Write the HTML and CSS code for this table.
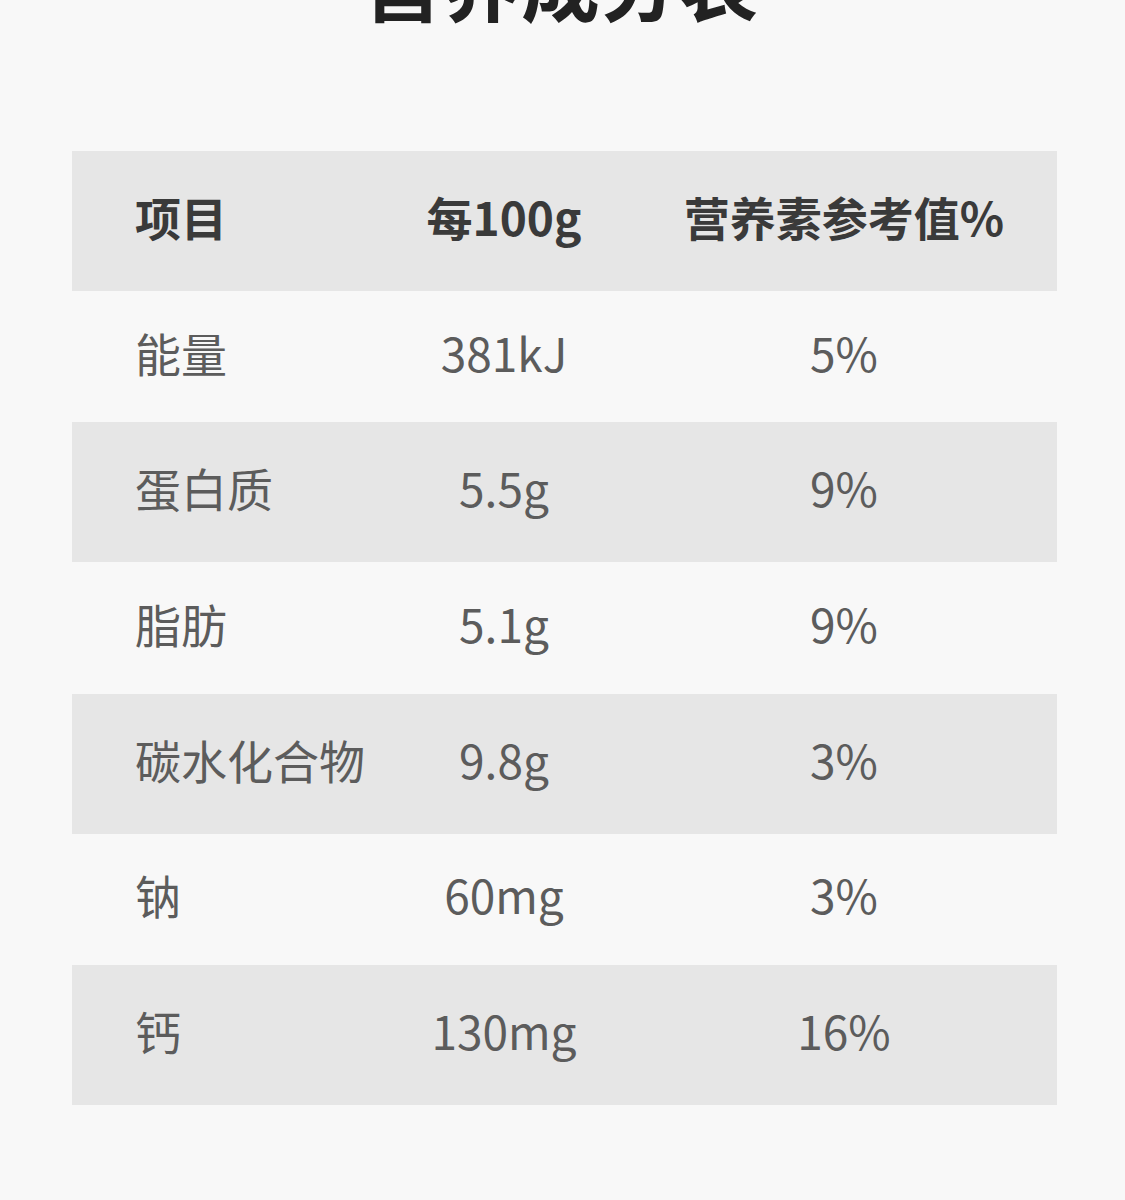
FILE: index.html
```html
<!DOCTYPE html>
<html lang="zh-CN">
<head>
<meta charset="utf-8">
<title>营养成分表</title>
<link rel="stylesheet" href="styles.css">
</head>
<body>
<div class="page">
  <h1 class="title">营养成分表</h1>
  <div class="table">
    <div class="row head">
      <div class="c1">项目</div>
      <div class="c2">每100g</div>
      <div class="c3">营养素参考值%</div>
    </div>
    <div class="row light">
      <div class="c1">能量</div>
      <div class="c2">381kJ</div>
      <div class="c3">5%</div>
    </div>
    <div class="row dark">
      <div class="c1">蛋白质</div>
      <div class="c2">5.5g</div>
      <div class="c3">9%</div>
    </div>
    <div class="row light">
      <div class="c1">脂肪</div>
      <div class="c2">5.1g</div>
      <div class="c3">9%</div>
    </div>
    <div class="row dark">
      <div class="c1">碳水化合物</div>
      <div class="c2">9.8g</div>
      <div class="c3">3%</div>
    </div>
    <div class="row light">
      <div class="c1">钠</div>
      <div class="c2">60mg</div>
      <div class="c3">3%</div>
    </div>
    <div class="row dark">
      <div class="c1">钙</div>
      <div class="c2">130mg</div>
      <div class="c3">16%</div>
    </div>
  </div>
</div>
</body>
</html>
```
FILE: styles.css
```css
html, body {
  margin: 0;
  padding: 0;
  background: #f8f8f8;
}
body {
  font-family: "Noto Sans CJK SC", "Noto Sans", sans-serif;
  overflow: hidden;
}
.page {
  padding: 0 68px 0 72px;
}
.title {
  margin: -58px 0 0 -8px;
  height: 80px;
  line-height: 80px;
  font-size: 79px;
  font-weight: 700;
  color: #222222;
  text-align: center;
}
.table {
  margin-top: 129px;
  width: 985px;
}
.row {
  display: grid;
  grid-template-columns: 305px 254px 426px;
  align-items: center;
  font-size: 46px;
  line-height: 1;
  box-sizing: border-box;
  padding-bottom: 10px;
}
.row .c1 {
  padding-left: 63px;
  text-align: left;
}
.row .c2, .row .c3 {
  text-align: center;
}
.head {
  height: 140px;
  background: #e6e6e6;
  color: #3a3a3a;
  font-weight: 700;
}
.light {
  height: 131.33px;
  background: #f8f8f8;
  color: #5c5c5c;
}
.dark {
  height: 140px;
  background: #e6e6e6;
  color: #5c5c5c;
}
```
